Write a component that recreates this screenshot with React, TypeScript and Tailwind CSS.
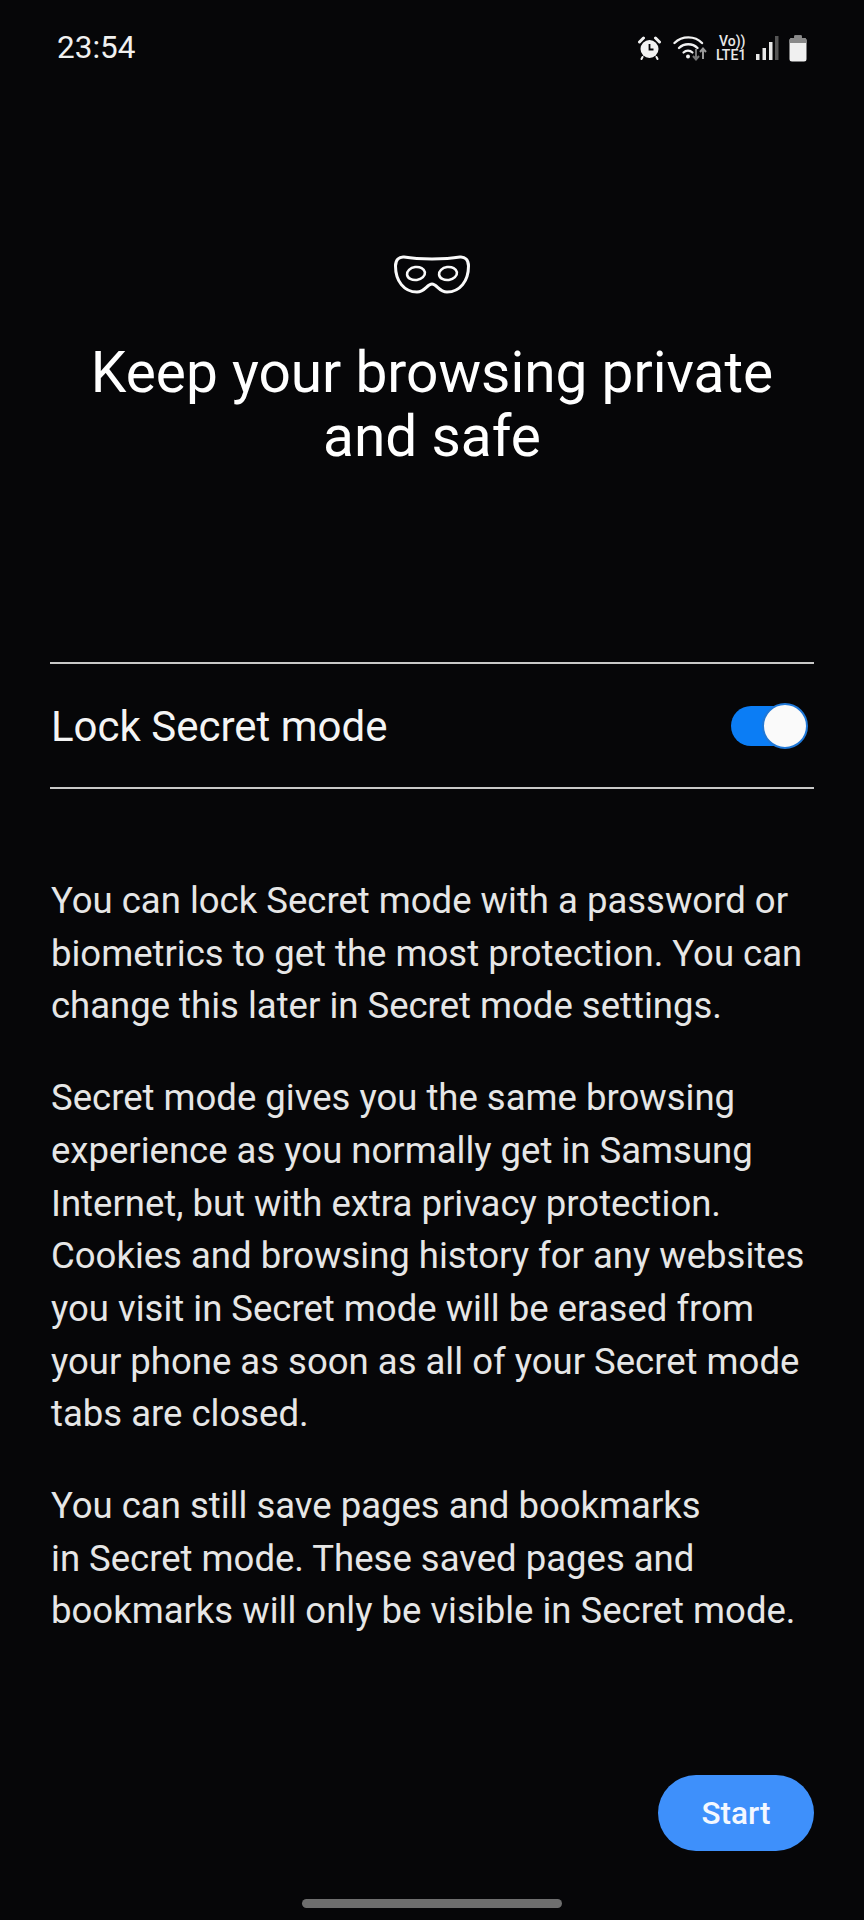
const paragraphs = [
  ["You can lock Secret mode with a password or", "biometrics to get the most protection. You can", "change this later in Secret mode settings."],
  [
    "Secret mode gives you the same browsing",
    "experience as you normally get in Samsung",
    "Internet, but with extra privacy protection.",
    "Cookies and browsing history for any websites",
    "you visit in Secret mode will be erased from",
    "your phone as soon as all of your Secret mode",
    "tabs are closed.",
  ],
  ["You can still save pages and bookmarks", "in Secret mode. These saved pages and", "bookmarks will only be visible in Secret mode."],
];

function AlarmIcon() {
  return (
    <svg width="25" height="24" viewBox="0 0 24 24" className="text-[#f2f2f2]">
      <circle cx="12" cy="13" r="9" fill="currentColor" />
      <path d="M2 6 L6 2 M18 2 L22 6" stroke="currentColor" strokeWidth="3" strokeLinecap="round" />
      <path d="M12 8 V13.5 H16" fill="none" stroke="#060608" strokeWidth="1.8" />
      <path d="M5 21 L4 23 M19 21 L20 23" stroke="currentColor" strokeWidth="2" strokeLinecap="round" />
    </svg>
  );
}

function WifiIcon() {
  return (
    <svg width="34" height="28" viewBox="0 0 34 28" fill="none">
      <path d="M1.5 9 C9 1.5 22 1.5 29 9" stroke="#f2f2f2" strokeWidth="2.4" strokeLinecap="round" />
      <path d="M6 14 C11 9 19.5 9 24.5 14" stroke="#f2f2f2" strokeWidth="2.4" strokeLinecap="round" />
      <path d="M10.5 18.5 C13 16 17 16 19.5 18.5" stroke="#f2f2f2" strokeWidth="2.2" strokeLinecap="round" />
      <circle cx="15" cy="22.5" r="2" fill="#f2f2f2" />
      <path d="M23 15 V25 M20 22 L23 25.5 L26 22" stroke="#777" strokeWidth="2" />
      <path d="M30 25 V15 M27 18 L30 14.5 L33 18" stroke="#999" strokeWidth="2" />
    </svg>
  );
}

function SignalIcon() {
  return (
    <svg width="24" height="26" viewBox="0 0 24 26">
      <rect x="1" y="19" width="3.5" height="6" fill="#e8e8e8" />
      <rect x="7.5" y="13" width="3.5" height="12" fill="#e8e8e8" />
      <rect x="14" y="7" width="3.5" height="18" fill="#e8e8e8" />
      <rect x="20" y="1" width="3.5" height="24" fill="#555" />
    </svg>
  );
}

function BatteryIcon() {
  return (
    <svg width="18" height="27" viewBox="0 0 18 27">
      <path d="M5.5 0.5 H12.5 V3 H15 Q17.5 3 17.5 5.5 V24 Q17.5 26.5 15 26.5 H3 Q0.5 26.5 0.5 24 V5.5 Q0.5 3 3 3 H5.5 Z" fill="#f0f0f0" />
      <path d="M5.5 0.5 H12.5 V3 H15 Q17.5 3 17.5 5.5 V8 H0.5 V5.5 Q0.5 3 3 3 H5.5 Z" fill="#8a8a8a" />
    </svg>
  );
}

function MaskIcon() {
  return (
    <svg width="78" height="40" viewBox="0 0 78 40" fill="none" stroke="#fafafa">
      <path
        d="M11 3 C26 5.5 52 5.5 67 3 C72 2.5 75.5 6 75.5 12 C75.5 27 67 38 54 38 C46 38 44 30 39 30 C34 30 32 38 24 38 C11 38 2.5 27 2.5 12 C2.5 6 6 2.5 11 3 Z"
        strokeWidth="3"
      />
      <ellipse cx="23" cy="19.5" rx="9" ry="6.5" transform="rotate(-8 23 19.5)" strokeWidth="2.6" />
      <ellipse cx="55" cy="19.5" rx="9" ry="6.5" transform="rotate(-8 55 19.5)" strokeWidth="2.6" />
    </svg>
  );
}

export default function App() {
  return (
    <div className="w-[864px] h-[1920px] bg-[#060608] text-[#f4f4f4] flex flex-col font-['Roboto',sans-serif] overflow-hidden">
      <div className="h-[64px] mt-[16px] pl-[57px] pr-[57px] flex items-center justify-between">
        <span className="text-[31.5px] leading-none text-[#f0f0f0]">23:54</span>
        <div className="flex items-center">
          <AlarmIcon />
          <div className="ml-[11px]">
            <WifiIcon />
          </div>
          <div className="ml-[9px] w-[31px] flex flex-col items-start text-[#e8e8e8] font-medium leading-none">
            <span className="text-[14px] ml-[3px]">Vo))</span>
            <span className="text-[14px]">LTE1</span>
          </div>
          <div className="ml-[8px]">
            <SignalIcon />
          </div>
          <div className="ml-[10px]">
            <BatteryIcon />
          </div>
        </div>
      </div>

      <div className="mt-[174px] flex justify-center">
        <MaskIcon />
      </div>
      <h1 className="mt-[47px] text-center text-[56.8px] leading-[64px] text-white font-normal">
        Keep your browsing private
        <br />
        and safe
      </h1>

      <div className="mt-[193px] mx-[50px] h-[127px] border-y-2 border-[#c8c8c8] flex items-center justify-between">
        <span className="text-[42px] pl-[1px] pt-[2px] text-[#f4f4f4]">Lock Secret mode</span>
        <div className="relative w-[74px] h-[40px] mr-[9px] rounded-full bg-[#0b7df5]">
          <div className="absolute right-[-3px] top-[-3px] w-[46px] h-[46px] rounded-full bg-[#fafafa] border-2 border-[#1f78d8]" />
        </div>
      </div>

      <div className="mt-[86px] ml-[51px] mr-[50px] flex flex-col gap-[39px] text-[36.5px] leading-[52.7px] text-[#e6e6e6]">
        {paragraphs.map((lines) => (
          <p key={lines[0]}>
            {lines.map((line) => (
              <span key={line} className="block whitespace-nowrap">
                {line}
              </span>
            ))}
          </p>
        ))}
      </div>

      <div className="flex-1" />
      <div className="flex justify-end pr-[50px]">
        <button className="w-[156px] h-[76px] pt-[2px] rounded-full bg-[#3e90fb] text-[#f4f8ff] text-[31.5px] font-medium">Start</button>
      </div>
      <div className="mt-[48px] mb-[12px] flex justify-center">
        <div className="w-[260px] h-[9px] rounded-full bg-[#6e6e6e]" />
      </div>
    </div>
  );
}
